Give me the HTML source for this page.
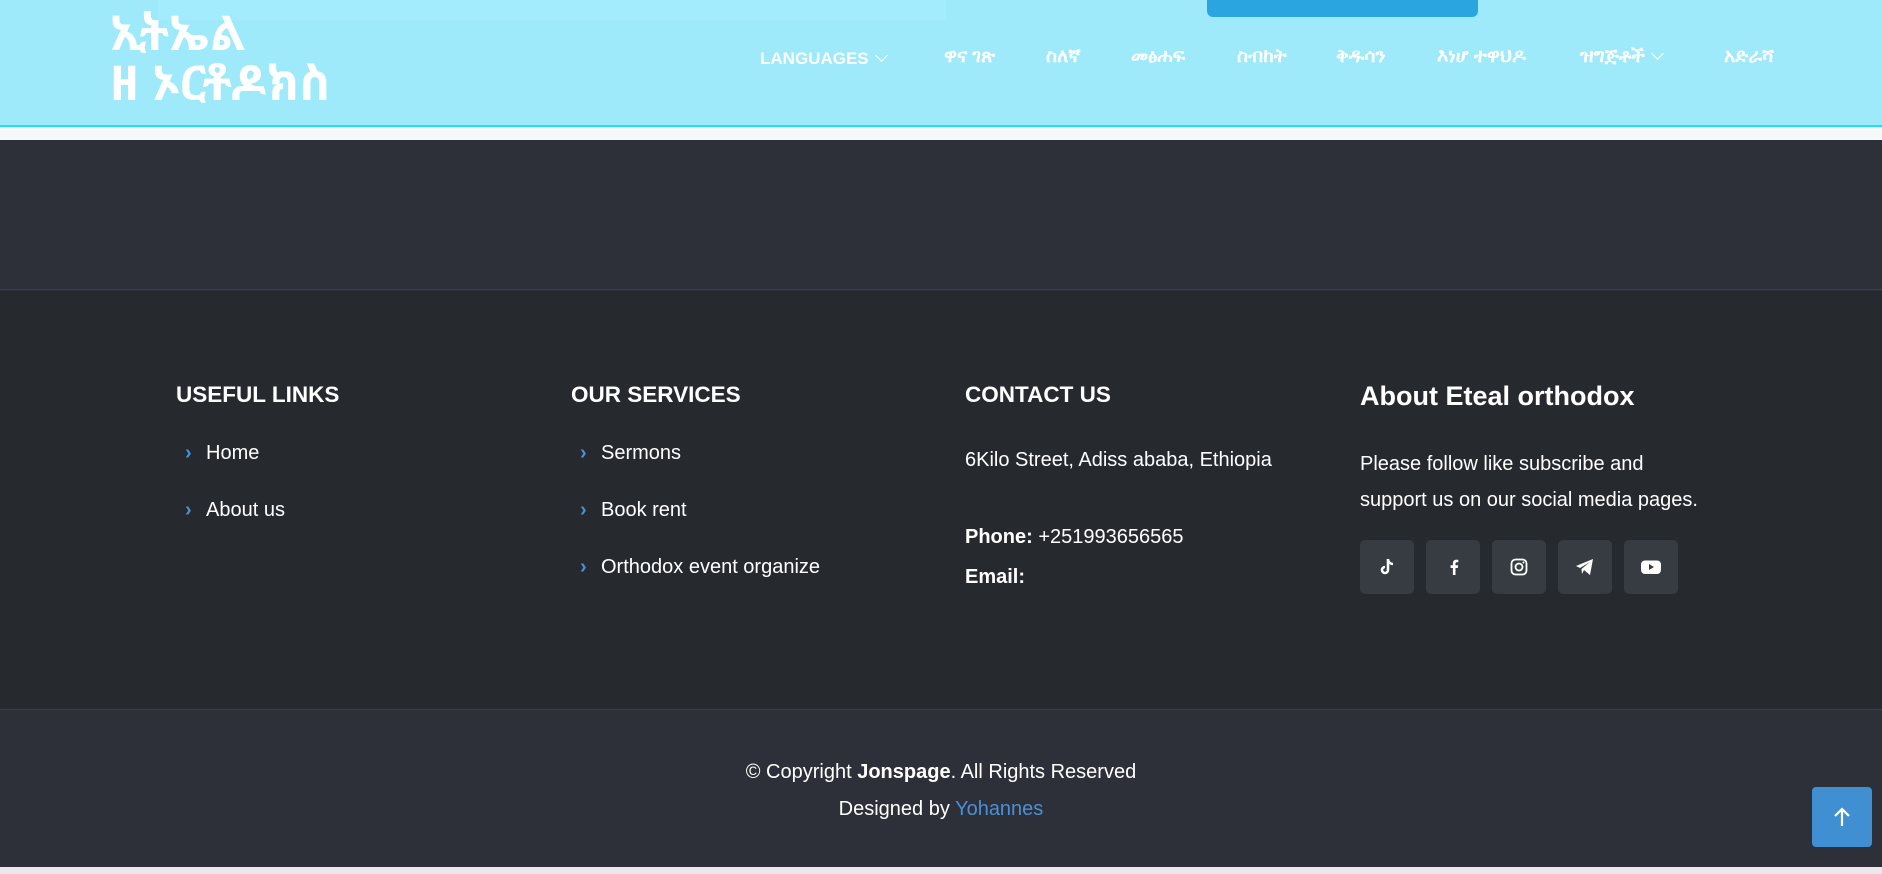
<!DOCTYPE html>
<html><head><meta charset="utf-8"><style>
*{margin:0;padding:0;box-sizing:border-box}
body{width:1882px;height:874px;overflow:hidden;position:relative;font-family:"Liberation Sans",Arial,sans-serif;background:#2d3038;color:#fff}
.a{position:absolute;white-space:nowrap}
.hdr{position:absolute;left:0;top:0;width:1882px;height:127px;background:#9eeafb;border-bottom:2px solid #1fe0f5}
.nav{font-size:19px;font-weight:bold;top:45px;line-height:24px}
.nav.en{font-size:17px;top:47px}
.chev{display:inline-block;width:9px;height:9px;border-right:1.5px solid #fff;border-bottom:1.5px solid #fff;transform:rotate(45deg);margin-left:8px;position:relative;top:-4px}
h4{font-size:22.5px;font-weight:bold;position:absolute;white-space:nowrap}
.l{position:absolute;font-size:20px;white-space:nowrap;line-height:22px}
.l b.c{color:#4a90d6;font-weight:bold;display:inline-block;width:30px;padding-left:9px}
.soc{position:absolute;top:540px;width:54px;height:54px;background:#373c43;border-radius:5px;display:flex;align-items:center;justify-content:center}
</style></head><body>
<div class="hdr"></div>
<div class="a" style="left:158px;top:0;width:788px;height:20px;background:#a3ecfd"></div>
<div class="a" style="left:1207px;top:0;width:271px;height:17px;background:#2aa5df;border-radius:0 0 6px 6px"></div>
<div class="a" style="left:0;top:127px;width:1882px;height:13px;background:#f7f8f9"></div>
<div class="a" style="left:110px;top:10px;font-size:48px;font-weight:bold;line-height:50px;font-family:'Liberation Sans','Noto Sans Ethiopic',sans-serif">ኢትኤል<br>ዘ ኦርቶዶክስ</div>
<div class="a nav en" style="left:760px">LANGUAGES<span class="chev"></span></div>
<div class="a nav" style="left:944px">ዋና ገጽ</div>
<div class="a nav" style="left:1046px">ስለኛ</div>
<div class="a nav" style="left:1131px">መፅሐፍ</div>
<div class="a nav" style="left:1237px">ስብከት</div>
<div class="a nav" style="left:1336px">ቅዱሳን</div>
<div class="a nav" style="left:1437px">እነሆ ተዋህዶ</div>
<div class="a nav" style="left:1580px">ዝግጅቶች<span class="chev"></span></div>
<div class="a nav" style="left:1724px">አድራሻ</div>

<div class="a" style="left:0;top:140px;width:1882px;height:150px;background:#2d3038;border-bottom:1px solid #3a3e46"></div>
<div class="a" style="left:0;top:291px;width:1882px;height:419px;background:#262a2f;border-bottom:1px solid #3a3e46"></div>

<h4 style="left:176px;top:382px">USEFUL LINKS</h4>
<div class="l" style="left:176px;top:442px"><b class="c">›</b>Home</div>
<div class="l" style="left:176px;top:499px"><b class="c">›</b>About us</div>

<h4 style="left:571px;top:382px">OUR SERVICES</h4>
<div class="l" style="left:571px;top:442px"><b class="c">›</b>Sermons</div>
<div class="l" style="left:571px;top:499px"><b class="c">›</b>Book rent</div>
<div class="l" style="left:571px;top:556px"><b class="c">›</b>Orthodox event organize</div>

<h4 style="left:965px;top:382px">CONTACT US</h4>
<div class="l" style="left:965px;top:449px">6Kilo Street, Adiss ababa, Ethiopia</div>
<div class="l" style="left:965px;top:526px"><b>Phone:</b> +251993656565</div>
<div class="l" style="left:965px;top:566px"><b>Email:</b></div>

<h4 style="left:1360px;top:381px;font-size:27px">About Eteal orthodox</h4>
<div class="l" style="left:1360px;top:446px;line-height:36px">Please follow like subscribe and<br>support us on our social media pages.</div>

<div class="soc" style="left:1360px"><svg width="20" height="20" viewBox="0 0 20 20"><path d="M11 2v11a3 3 0 1 1-3-3" fill="none" stroke="#fff" stroke-width="2.6"/><path d="M11 3c1 3 3 4 5 4" fill="none" stroke="#fff" stroke-width="2.4"/></svg></div>
<div class="soc" style="left:1426px"><svg width="20" height="20" viewBox="0 0 20 20"><path d="M12.5 18V11h2.3l.4-2.8h-2.7V6.6c0-.8.3-1.3 1.4-1.3h1.4V2.8c-.3 0-1.1-.1-2-.1-2 0-3.4 1.2-3.4 3.5v2H7.6V11h2.3v7z" fill="#fff"/></svg></div>
<div class="soc" style="left:1492px"><svg width="20" height="20" viewBox="0 0 20 20"><rect x="2.5" y="2.5" width="15" height="15" rx="4" fill="none" stroke="#fff" stroke-width="1.8"/><circle cx="10" cy="10" r="3.5" fill="none" stroke="#fff" stroke-width="1.8"/><circle cx="14.5" cy="5.5" r="1" fill="#fff"/></svg></div>
<div class="soc" style="left:1558px"><svg width="22" height="20" viewBox="0 0 22 20"><path d="M2 9L19 2 16 18 10 13 8 17 7.5 12 16 5 6 11z" fill="#fff"/></svg></div>
<div class="soc" style="left:1624px"><svg width="22" height="20" viewBox="0 0 22 20"><rect x="1" y="3.5" width="20" height="13.5" rx="4" fill="#fff"/><path d="M9 7l5 3-5 3z" fill="#373c43"/></svg></div>

<div class="l" style="left:0;width:1882px;text-align:center;top:761px">© Copyright <b>Jonspage</b>. All Rights Reserved</div>
<div class="l" style="left:0;width:1882px;text-align:center;top:798px">Designed by <span style="color:#4a90d6">Yohannes</span></div>
<div class="a" style="left:1812px;top:787px;width:60px;height:60px;background:#3f8fd2;border-radius:4px;display:flex;align-items:center;justify-content:center"><svg width="20" height="24" viewBox="0 0 20 24"><path d="M10 21V4M3 11l7-7 7 7" fill="none" stroke="#fff" stroke-width="2.2"/></svg></div>
<div class="a" style="left:0;top:867px;width:1882px;height:7px;background:#ece7ea"></div>
</body></html>
